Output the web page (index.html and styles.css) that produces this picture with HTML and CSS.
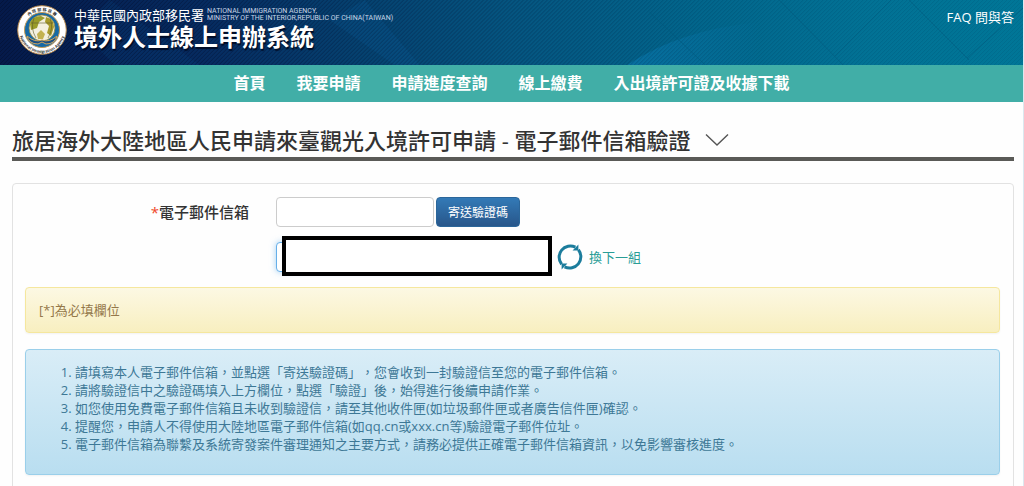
FILE: index.html
```
<!DOCTYPE html>
<html lang="zh-TW">
<head>
    <meta charset="UTF-8">
    <meta name="viewport" content="width=device-width, initial-scale=1.0">
    <title>境外人士線上申辦系統</title>
    <link rel="stylesheet" href="styles.css">
</head>
<body>
    <header class="site-header">
        <svg class="header-bg" width="100%" height="100%" viewBox="0 0 1024 65" preserveAspectRatio="none" aria-hidden="true">
            <defs>
                <linearGradient id="sea" x1="0" y1="0" x2="1" y2="0">
                    <stop offset="0" stop-color="#051a4a"/>
                    <stop offset="0.2" stop-color="#062b60"/>
                    <stop offset="0.35" stop-color="#05416f"/>
                    <stop offset="0.5" stop-color="#055580"/>
                    <stop offset="0.68" stop-color="#02668c"/>
                    <stop offset="0.85" stop-color="#027295"/>
                    <stop offset="1" stop-color="#007697"/>
                </linearGradient>
                <linearGradient id="fade" x1="0" y1="0" x2="1" y2="0">
                    <stop offset="0" stop-color="#fff"/>
                    <stop offset="0.4" stop-color="#999"/>
                    <stop offset="0.8" stop-color="#333"/>
                    <stop offset="1" stop-color="#222"/>
                </linearGradient>
                <linearGradient id="glow" x1="0" y1="0" x2="1" y2="0">
                    <stop offset="0" stop-color="#0b7fb8" stop-opacity="0.5"/>
                    <stop offset="1" stop-color="#0b7fb8" stop-opacity="0"/>
                </linearGradient>
                <mask id="stripeMask"><rect width="1024" height="65" fill="url(#fade)"/></mask>
                <pattern id="stripes" width="4" height="4" patternUnits="userSpaceOnUse">
                    <path d="M-1 5L5 -1M-1 1L1 -1M3 5L5 3" stroke="#021030" stroke-width="1" opacity="0.55"/>
                </pattern>
            </defs>
            <rect width="1024" height="65" fill="url(#sea)"/>
            <path d="M80 30L115 65H200L110 0z" fill="#0c4a85" opacity="0.2"/>
            <path d="M365 0L420 65H395L330 20z" fill="#0a5c96" opacity="0.25"/>
            <path d="M628 65Q680 30 760 22V65z" fill="url(#glow)"/>
            <rect width="1024" height="65" fill="url(#stripes)" mask="url(#stripeMask)"/>
            <path d="M650 12L706 65M780 0L844 65M892 0L836 56M910 0L970 60M1024 8L968 58" stroke="#02597c" fill="none" opacity="0.5"/>
        </svg>
        <div class="brand">
            <svg class="seal" viewBox="0 0 50 50" aria-hidden="true">
                <defs>
                    <path id="arcTop" d="M6 25A19 19 0 0 1 44 25"/>
                    <path id="arcBottom" d="M2 25A23 23 0 0 0 48 25"/>
                </defs>
                <circle cx="25" cy="25" r="24.3" fill="#fff" stroke="#b98a4e" stroke-width="1"/>
                <circle cx="25" cy="25" r="17.5" fill="#1769a5" stroke="#c79b55" stroke-width="1"/>
                <circle cx="25" cy="23" r="13" fill="#f4f0e0" stroke="#8b8037" stroke-width="0.8"/>
                <path d="M13 19Q15 11 24 11L28 13L22 17L20 23L14 25z" fill="#9a9c2a"/>
                <path d="M29 12Q37 14 37 22L34 31L30 28L32 21L28 17z" fill="#a79a2c"/>
                <path d="M20 29L24 25L28 29L26 34L21 34z" fill="#c3b251"/>
                <path d="M17 13Q13 23 19 33M33 13Q37 23 31 33M14 18H36" fill="none" stroke="#5f5c28" stroke-width="0.6"/>
                <path d="M10 31Q18 38 25 35Q32 38 40 31Q38 39 29 39L25 37L21 39Q12 39 10 31z" fill="#1b4f83" stroke="#d0a45e" stroke-width="1"/>
                <text class="seal-top"><textPath href="#arcTop" startOffset="50%">內 政 部 移 民 署</textPath></text>
                <text class="seal-bottom"><textPath href="#arcBottom" startOffset="50%">National Immigration Agency</textPath></text>
            </svg>
            <div class="brand-text">
                <div class="agency">
                    <span class="agency-zh">中華民國內政部移民署</span>
                    <span class="agency-en">NATIONAL IMMIGRATION AGENCY,<br>MINISTRY OF THE INTERIOR,REPUBLIC OF CHINA(TAIWAN)</span>
                </div>
                <div class="system-name">境外人士線上申辦系統</div>
            </div>
        </div>
        <a class="faq" href="#">FAQ 問與答</a>
    </header>

    <nav class="main-nav">
        <a href="#">首頁</a>
        <a href="#">我要申請</a>
        <a href="#">申請進度查詢</a>
        <a href="#">線上繳費</a>
        <a href="#">入出境許可證及收據下載</a>
    </nav>

    <main class="content">
        <h1 class="page-title">
            旅居海外大陸地區人民申請來臺觀光入境許可申請 - 電子郵件信箱驗證
            <svg class="chevron" viewBox="0 0 24 14" aria-hidden="true"><path d="M1 1.5L12 12L23 1.5"/></svg>
        </h1>

        <form class="panel">
            <div class="form-row">
                <label class="form-label" for="email"><span class="required">*</span>電子郵件信箱</label>
                <div class="field">
                    <input class="text-input" type="email" id="email">
                    <button class="btn-send" type="button">寄送驗證碼</button>
                </div>
            </div>
            <div class="form-row">
                <div class="form-label"></div>
                <div class="field">
                    <div class="captcha">
                        <input class="text-input focused" type="text" id="captcha" aria-label="驗證碼">
                        <div class="mask"></div>
                    </div>
                    <a class="refresh" href="#">
                        <svg class="refresh-icon" viewBox="0 0 26 26" aria-hidden="true">
                            <path class="ring" d="M4.6 20.2A11.2 11.2 0 0 1 18.4 3.2"/>
                            <path class="ring" d="M21.4 5.8A11.2 11.2 0 0 1 7.6 22.8"/>
                            <path class="head" d="M21.4 0.4V6.4H15.6z"/>
                            <path class="head" d="M4.6 25.6V19.6H10.4z"/>
                        </svg>
                        換下一組
                    </a>
                </div>
            </div>

            <div class="alert alert-warning">[*]為必填欄位</div>

            <div class="alert alert-info">
                <ol>
                    <li>請填寫本人電子郵件信箱，並點選「寄送驗證碼」，您會收到一封驗證信至您的電子郵件信箱。</li>
                    <li>請將驗證信中之驗證碼填入上方欄位，點選「驗證」後，始得進行後續申請作業。</li>
                    <li>如您使用免費電子郵件信箱且未收到驗證信，請至其他收件匣(如垃圾郵件匣或者廣告信件匣)確認。</li>
                    <li>提醒您，申請人不得使用大陸地區電子郵件信箱(如qq.cn或xxx.cn等)驗證電子郵件位址。</li>
                    <li>電子郵件信箱為聯繫及系統寄發案件審理通知之主要方式，請務必提供正確電子郵件信箱資訊，以免影響審核進度。</li>
                </ol>
            </div>
        </form>
    </main>
</body>
</html>
```
FILE: styles.css
```
* {
    box-sizing: border-box;
}
body {
    margin: 0;
    font-family: "Open Sans", "Noto Sans CJK TC", sans-serif;
    font-size: 13px;
    line-height: 18px;
    text-spacing-trim: space-all;
    color: #333;
    background-color: #fefefe;
    border-right: 1px solid #dbe8ef;
}
a {
    text-decoration: none;
}

/* header */
.site-header {
    position: relative;
    display: flex;
    justify-content: space-between;
    align-items: flex-start;
    height: 65px;
    padding: 5px 9px 0 17px;
    overflow: hidden;
    background-color: #015f86;
}
.header-bg {
    position: absolute;
    top: 0;
    left: 0;
}
.brand {
    position: relative;
    display: flex;
    gap: 7px;
    color: #fff;
}
.seal {
    width: 50px;
    height: 50px;
}
.seal-top,
.seal-bottom {
    font-size: 4px;
    font-weight: bold;
    text-anchor: middle;
    fill: #333;
}
.agency {
    display: flex;
    align-items: center;
    gap: 3px;
    height: 19px;
}
.agency-zh {
    font-size: 13px;
}
.agency-en {
    font-family: Roboto, sans-serif;
    font-size: 7px;
    line-height: 7px;
    color: #c9d6e6;
}
.system-name {
    font-size: 24px;
    font-weight: bold;
    line-height: 26px;
    text-shadow: 1px 2px 1px #010c26;
}
.faq {
    position: relative;
    margin-top: 3px;
    color: #fff;
}

/* nav */
.main-nav {
    display: flex;
    justify-content: center;
    gap: 31px;
    height: 37px;
    background-color: #41aea7;
}
.main-nav a {
    font-size: 16px;
    font-weight: bold;
    line-height: 36px;
    color: #fff;
}

/* content */
.content {
    padding: 24px 9px 0 12px;
}
.page-title {
    display: flex;
    align-items: center;
    gap: 14px;
    margin: 0 0 22px;
    padding-bottom: 3px;
    border-bottom: 4px solid #5a5a57;
    font-size: 22px;
    font-weight: 500;
    line-height: 28px;
}
.chevron {
    width: 24px;
    height: 14px;
    fill: none;
    stroke: #555;
    stroke-width: 1.4;
}
.panel {
    min-height: 320px;
    padding: 13px 13px 13px 12px;
    border: 1px solid #e2e2e2;
    border-radius: 4px;
}
.form-row {
    display: flex;
    gap: 27px;
    margin-bottom: 15px;
}
.form-label {
    width: 224px;
    font-size: 15px;
    font-weight: 500;
    line-height: 30px;
    text-align: right;
}
.required {
    color: #f0472c;
}
.field {
    display: flex;
    align-items: center;
    gap: 2px;
}
.text-input {
    width: 158px;
    height: 30px;
    padding: 4px 8px;
    border: 1px solid #ccc;
    border-radius: 4px;
    background-color: #fff;
    font-size: 13px;
}
.text-input.focused {
    display: block;
    border-color: #66afe9;
    box-shadow: 0 0 6px rgba(102, 175, 233, 0.6);
}
.btn-send {
    height: 30px;
    padding: 0 11px;
    border: 1px solid #2b669a;
    border-radius: 4px;
    background-image: linear-gradient(#337ab7, #28568a);
    color: #fff;
    font-family: inherit;
    font-size: 12px;
    cursor: pointer;
}
.captcha {
    position: relative;
    width: 279px;
}
.mask {
    position: absolute;
    top: -6px;
    left: 6px;
    width: 270px;
    height: 40px;
    border: 4px solid #000;
    background-color: #fff;
}
.refresh {
    display: flex;
    align-items: center;
    gap: 6px;
    color: #2a9d96;
}
.refresh-icon {
    width: 26px;
    height: 26px;
}
.ring {
    fill: none;
    stroke: #1b7c9c;
    stroke-width: 3;
}
.head {
    fill: #1b7c9c;
}

/* messages */
.alert {
    border: 1px solid;
    border-radius: 4px;
    box-shadow: 0 1px 2px rgba(0, 0, 0, 0.05);
}
.alert-warning {
    margin-bottom: 16px;
    padding: 13px;
    border-color: #f5e79e;
    background-image: linear-gradient(#fcf8e3, #f8efc0);
    color: #94784a;
}
.alert-info {
    padding: 13px;
    border-color: #9acfea;
    background-image: linear-gradient(#d9edf7, #b9def0);
    color: #3d7896;
}
.alert-info ol {
    margin: 0 0 8px;
    padding-left: 36px;
}
```
